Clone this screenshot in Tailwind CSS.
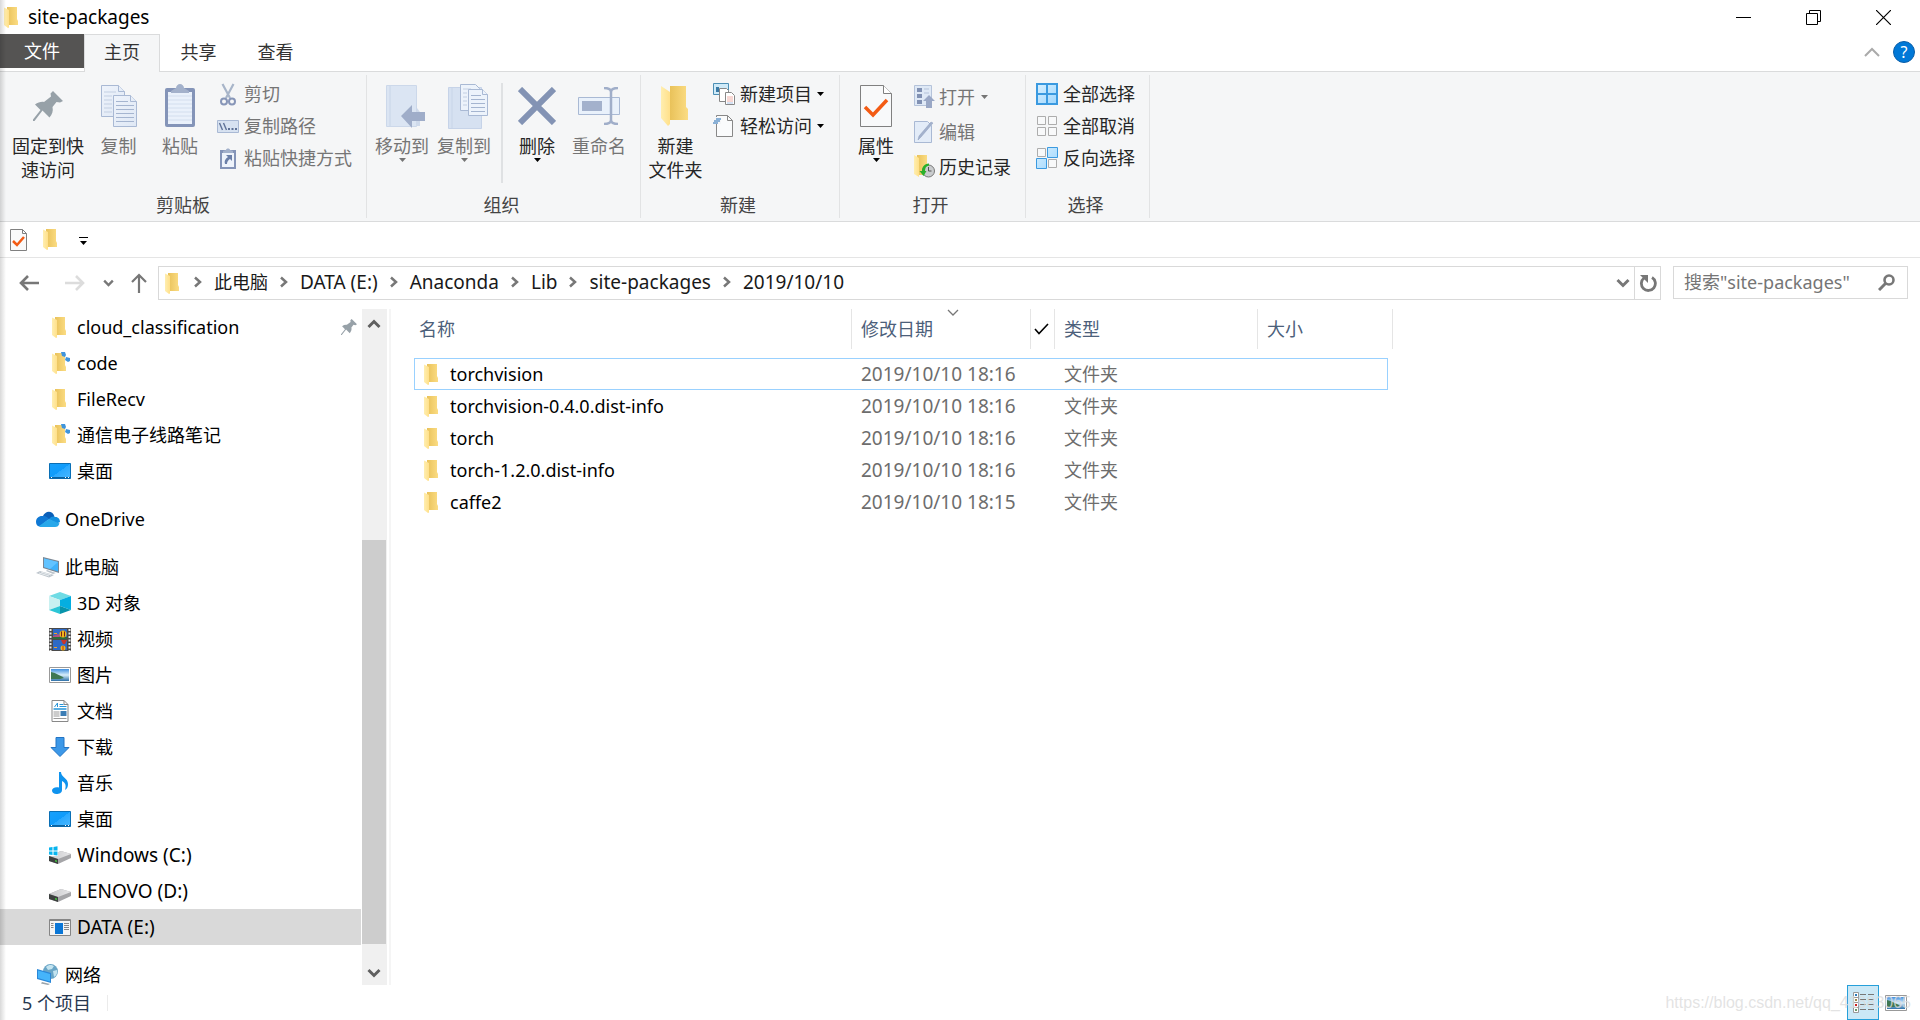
<!DOCTYPE html>
<html lang="zh-CN">
<head>
<meta charset="utf-8">
<meta name="viewport" content="width=device-width, initial-scale=1">
<title>site-packages</title>
<script src="https://cdn.jsdelivr.net/npm/@tailwindcss/browser@4"></script>
</head>
<body class="flex h-screen flex-col overflow-hidden bg-white font-['Noto_Sans','Noto_Sans_CJK_SC',sans-serif] text-[18px] leading-6 text-black">

<!-- Icon library -->
<svg class="absolute size-0" aria-hidden="true">
  <defs>
    <linearGradient id="gBack" x1="0" x2="1"><stop offset="0" stop-color="#e9c25a"/><stop offset="1" stop-color="#fbdc83"/></linearGradient>
    <linearGradient id="gFront" x1="0" x2="1"><stop offset="0" stop-color="#ffeeb0"/><stop offset="1" stop-color="#ffe08a"/></linearGradient>
    <linearGradient id="gDesk" x1="0" y1="0" x2="1" y2="1"><stop offset="0" stop-color="#18a0fb"/><stop offset=".5" stop-color="#109cfb"/><stop offset=".5" stop-color="#2aa9ff"/><stop offset="1" stop-color="#49b7ff"/></linearGradient>
    <linearGradient id="gPaper" x1="0" y1="0" x2="1" y2="1"><stop offset="0" stop-color="#eef3fb"/><stop offset="1" stop-color="#dfe8f5"/></linearGradient>
    <linearGradient id="gBlue" x1="0" y1="0" x2="1" y2="1"><stop offset="0" stop-color="#d8f0ff"/><stop offset="1" stop-color="#9fd6fd"/></linearGradient>
    <linearGradient id="gSky" x1="0" y1="0" x2="0" y2="1"><stop offset="0" stop-color="#3f8fe0"/><stop offset=".5" stop-color="#d8eefa"/><stop offset="1" stop-color="#2c6fa8"/></linearGradient>
    <linearGradient id="gDrive" x1="0" x2="1"><stop offset="0" stop-color="#c9c9cb"/><stop offset="1" stop-color="#e6e6e8"/></linearGradient>
  </defs>
  <symbol id="folder" viewBox="0 0 14 21"><path d="M3 0h10v12l1 2v4H3z" fill="url(#gBack)"/><path d="M0 .5 5 3v17.500L4 21 0 18z" fill="url(#gFront)"/></symbol>
  <symbol id="folderSync" viewBox="0 0 19 22"><path d="M3 1h10v12l1 2v4H3z" fill="url(#gBack)"/><path d="M0 1.500 5 4v17.500L4 22 0 19z" fill="url(#gFront)"/><path d="M9 0h4l1 3-1 2-3-1zM14 5l4 1v3l-2 1-3-2z" fill="#3f94dc"/></symbol>
  <symbol id="pin" viewBox="0 0 30 30"><path d="M20 0 30 10l-3 1.500-3.500-.5-4 5c1 4-.500 7.500-3 10.500l-7-7L1.500 30H0v-1.500L7.500 19 2 13.500c3-2 6-3 9-2.500l7-5.500-.5-3z" fill="#97a1a8"/></symbol>
  <symbol id="caret" viewBox="0 0 7 4"><path d="M0 0h7L3.500 4z" fill="currentColor"/></symbol>
  <symbol id="chev" viewBox="0 0 8 12"><path d="M1 1.500 6 6l-5 4.500" fill="none" stroke="currentColor" stroke-width="2.500"/></symbol>
  <symbol id="chevDown" viewBox="0 0 14 10"><path d="M1.500 2 7 7.500 12.500 2" fill="none" stroke="currentColor" stroke-width="3"/></symbol>
  <symbol id="copy" viewBox="0 0 36 42"><g fill="url(#gPaper)" stroke="#a9b9d4"><path d="M.5.5h17l6 6v25H.5z"/><path d="M17.500.5v6h6" /></g><path d="M3 7h12M3 11h8M3 15h8M3 19h8M3 23h8M3 27h8" stroke="#c3cfe2"/><g fill="url(#gPaper)" stroke="#a9b9d4"><path d="M12.500 10.500h17l6 6v25h-23z"/><path d="M29.500 10.500v6h6"/></g><path d="M15 16.500h12M15 20.500h18M15 24.500h18M15 28.500h18M15 32.500h18M15 36.500h18" stroke="#a5b5d0"/></symbol>
  <symbol id="paste" viewBox="0 0 30 44"><rect y="4" width="30" height="39" rx="2" fill="#8494b8"/><path d="M3 8h24v32H3z" fill="#eaf1fb"/><path d="M3 12h24M3 16h24M3 20h24M3 24h24M3 28h24M3 32h24M3 36h24" stroke="#d3deee"/><path d="M6 9V7l5-3c0-2 2-4 4-4s4 2 4 4l5 3v2z" fill="#a3b1cb"/></symbol>
  <symbol id="cut" viewBox="0 0 16 23"><path d="M2.500 1 10 15M13.500 1 6 15" stroke="#a8b5c9" stroke-width="2.200" fill="none"/><g fill="none" stroke="#8796b8" stroke-width="2"><circle cx="4" cy="18.500" r="3"/><circle cx="12" cy="18.500" r="3"/></g></symbol>
  <symbol id="path" viewBox="0 0 22 13"><path d="M.5.500h21v12H.5z" fill="#d7e2f1" stroke="#a9b9d4"/><path d="m2.500 3 3 7M6.500 3l3 7" stroke="#5f7297" stroke-width="1.400"/><path d="M11 8h2v2h-2zm3.500 0h2v2h-2zm3.500 0h2v2h-2z" fill="#5f7297"/></symbol>
  <symbol id="shortcut" viewBox="0 0 16 22"><path d="M0 3h16v19H0z" fill="#8494b8"/><path d="M2 6h12v14H2z" fill="#eef3fb"/><path d="M3 6V4l3-1c0-2 4-2 4 0l3 1v2z" fill="#a3b1cb"/><path d="M6 8h6v6l-2-2c-2 1-3 3-3 5l-2 0c-1-3 0-5 3-7z" fill="#6b7fa8"/></symbol>
  <symbol id="moveTo" viewBox="0 0 40 44"><path d="M.5 1.500h30v41H.5z" fill="#dbe5f3" stroke="#ccd8ea"/><path d="M4 2v40" stroke="#c8d5e8"/><path d="m31 24 3 4v14h-4z" fill="#cfdaeb"/><path d="M15 32 26 21v7h13v9H26v7z" fill="#9fadc9"/></symbol>
  <symbol id="copyTo" viewBox="0 0 40 46"><path d="M.5 3.500h33v41H.5z" fill="#d6e1f1" stroke="#c6d3e8"/><path d="M4 4v40" stroke="#c8d5e8"/><path d="M12.500.5h15l4 4v22h-19z" fill="#edf3fb" stroke="#a9b9d4"/><path d="M15 5h8M15 9h4M15 13h4M15 17h4M15 21h4" stroke="#c3cfe2"/><g fill="#edf3fb" stroke="#a9b9d4"><path d="M20.500 5.500h14l5 5v21h-19z"/><path d="M34.500 5.500v5h5"/></g><path d="M23 11.500h10M23 15.500h14M23 19.500h14M23 23.500h14M23 27.500h14" stroke="#a5b5d0"/></symbol>
  <symbol id="delete" viewBox="0 0 38 38"><path d="m2 2 34 34M36 2 2 36" stroke="#8393b4" stroke-width="6"/></symbol>
  <symbol id="rename" viewBox="0 0 42 38"><path d="M.5 10.500h41v17H.5z" fill="#e9f1fb" stroke="#a9b9d4"/><path d="M4 14h20v10H4z" fill="#a3b1cc"/><path d="M26 1c4 0 7 1 7 4v28c0 3-3 4-7 4M40 1c-4 0-7 1-7 4M33 33c0 3 3 4 7 4" fill="none" stroke="#a0aec9" stroke-width="2.500"/></symbol>
  <symbol id="newFolder" viewBox="0 0 30 42"><path d="M9 1h16v21l2 2v11H9z" fill="url(#gBack)"/><path d="M0 1 9 7v32l-2 2-7-8z" fill="url(#gFront)"/></symbol>
  <symbol id="newItem" viewBox="0 0 22 22"><path d="M.5.500h15v11H.5z" fill="#cfeaf8" stroke="#4d8fb5"/><path d="M3 4h3v5H3z" fill="#3a7aa6"/><path d="M6.500 5.500h7l2 2v11h-9z" fill="#fff" stroke="#888"/><path d="M12.500 9.500h6l3 3v9h-9z" fill="#fff" stroke="#888"/><path d="M14 14h6M14 16h6M14 18h6" stroke="#f0b0a8"/><path d="M14 20h6" stroke="#a9c4e8"/></symbol>
  <symbol id="easy" viewBox="0 0 22 22"><path d="M3.500.5h11l5 5v16h-16z" fill="#fafbfc" stroke="#888"/><path d="M14.500.5v5h5" fill="none" stroke="#888"/><path d="M0 2h8v7H0z" fill="#f5f6f8"/><path d="M3 4h5M1 6h6M0 8h5" stroke="#1f6ab3"/></symbol>
  <symbol id="props" viewBox="0 0 32 42"><path d="M.5.500h23l8 8v33H.5z" fill="#f8f9fa" stroke="#808080"/><path d="M23.500.5v8h8" fill="#fff" stroke="#808080"/><path d="m5 22 8 8L27 15" fill="none" stroke="#f35b14" stroke-width="3.500"/></symbol>
  <symbol id="open" viewBox="0 0 21 23"><path d="M.5.500h17v20H.5z" fill="#dfe9f6" stroke="#b5c3da"/><path d="M3 3h5v4H3zm0 6h5v4H3zm0 6h5v4H3z" fill="#8191b3"/><path d="M10 4h5M10 8h5" stroke="#b5c3da"/><path d="m15 10 6 6h-3v7h-6v-7H9z" fill="#9aa8c6"/></symbol>
  <symbol id="edit" viewBox="0 0 21 23"><path d="M.5 1.500h13l4 4v17H.5z" fill="#e3ecf8" stroke="#a9b9d4"/><path d="M19 3 7 17l-3 3 1-4L17 2z" fill="#a3b2cd" stroke="#8c9cbd" stroke-width=".5"/></symbol>
  <symbol id="history" viewBox="0 0 21 23"><path d="M3 0h10v20H3z" fill="url(#gBack)"/><path d="m0 0 5 3v19l-5-3z" fill="url(#gFront)"/><circle cx="14.500" cy="16" r="6" fill="#c9ccce" stroke="#777"/><path d="M14.500 12v4h3" stroke="#555" fill="none"/><path d="M15 8.500C10 9 8 12 8 16H5.500l4 5 3-5H11c0-3 1-5 4-5.500z" fill="#2bb02b"/></symbol>
  <symbol id="selAll" viewBox="0 0 22 22"><path d="M1 1h10v10H1zM11 1h10v10H11zM1 11h10v10H1zM11 11h10v10H11z" fill="url(#gBlue)" stroke="#3b9ae0" stroke-width="2"/></symbol>
  <symbol id="selNone" viewBox="0 0 22 22"><path d="M1.500 1.500h8v8h-8zM12.500 1.500h8v8h-8zM1.500 12.500h8v8h-8zM12.500 12.500h8v8h-8z" fill="#f8f9fa" stroke="#adadad"/></symbol>
  <symbol id="selInv" viewBox="0 0 22 22"><path d="M1.500 1.500h8v8h-8zM12.500 12.500h8v8h-8z" fill="#f8f9fa" stroke="#adadad"/><path d="M11.500.5h10v10h-10zM.5 11.500h10v10H.5z" fill="url(#gBlue)" stroke="#3b9ae0"/></symbol>
  <symbol id="propsSmall" viewBox="0 0 17 22"><path d="M.5.500h12l4 4v17H.5z" fill="#fafafa" stroke="#808080"/><path d="M12.500.5v4h4" fill="none" stroke="#808080"/><path d="m3 12 4 4 7-8" fill="none" stroke="#f35b14" stroke-width="2.500"/></symbol>
  <symbol id="arrow" viewBox="0 0 20 16"><path d="M20 8H2M9 1 2 8l7 7" fill="none" stroke="currentColor" stroke-width="2.600"/></symbol>
  <symbol id="desktop" viewBox="0 0 22 16"><path d="M.5.500h21v15H.5z" fill="url(#gDesk)" stroke="#0a6fb5"/><path d="M1 14h20v1.500H1z" fill="#0b62a0"/><path d="M2 14.500h1M16 14.500h1M19 14.500h1" stroke="#fff"/></symbol>
  <symbol id="onedrive" viewBox="0 0 24 16"><path d="M7 5C9 0 16-1.500 18.500 5.500L13 9z" fill="#0a5fb8"/><path d="M0 11c0-4 3-6.500 7-6 2-.5 5 1 6 3L4 15.500C2 15.500 0 14 0 11z" fill="#0f78d4"/><path d="M13 8c2-3 5-3 6.500-2 3 0 4.500 2.500 4.500 5l-4 2z" fill="#1490df"/><path d="m3 15 10-7 10.500 4.500c-1 2.500-2 3.500-4.500 3.500H5c-1 0-1.500-.5-2-1z" fill="#28a8ea"/></symbol>
  <symbol id="pc" viewBox="0 0 24 21"><path d="m7 0 16 4v12L7 11z" fill="#7b8794"/><path d="m8 1.500 14 3.500v9.500L8 10z" fill="#3fb1fa"/><path d="m8 1.500 14 3.500-8 7-6-2z" fill="#62c3ff"/><path d="m11 13 9 3-3 1-7-3zM0 16l4-2 14 4-5 2.500z" fill="#bcc4cb"/><path d="m3 16 10 3M5 15l10 3" stroke="#e8ecef"/></symbol>
  <symbol id="cube" viewBox="0 0 22 22"><path d="M11 0 22 4 11 8 0 4z" fill="#6fdbe4"/><path d="m11 8 11-4v14l-11-4z" fill="#05aee0"/><path d="m0 4 11 4v6L0 18z" fill="#c9f1f1"/><path d="m0 18 11-4v8z" fill="#2cc6d6"/><path d="m22 18-11-4v8z" fill="#0894ab"/></symbol>
  <symbol id="video" viewBox="0 0 22 23"><path d="M0 0h22v23H0z" fill="#4a4a4a"/><path d="M4 1h14v10H4zM4 12h14v10H4z" fill="#2e6ac6"/><path d="M1.500 1v22M20.500 1v22" stroke="#e8e8e8" stroke-width="2" stroke-dasharray="2 1.500"/><path d="M4 8l5-2 3 2-2 1H4z" fill="#b4517d"/><path d="M4 9h14v2H4z" fill="#2c6b3a"/><circle cx="14" cy="6" r="3.500" fill="#f0b51b"/><path d="M12.500 3.500v5M15.500 3.500v5" stroke="#7a2418"/><path d="m12 12 6 0-2 4h-2z" fill="#c8362b"/><circle cx="14" cy="20" r="2.500" fill="#f0b51b"/><path d="M14 18v4" stroke="#c22d18"/><path d="M5 5.500h3M5 19.500h3" stroke="#f0a32c"/></symbol>
  <symbol id="picture" viewBox="0 0 22 16"><path d="M.5.500h21v15H.5z" fill="#fff" stroke="#999"/><path d="M2 2h18v12H2z" fill="url(#gSky)"/><path d="M2 5c5 1 10 4 13 6l-4 1H2z" fill="#3e7753"/></symbol>
  <symbol id="doc" viewBox="0 0 17 22"><path d="M.5.500h12l4 4v17H.5z" fill="#fff" stroke="#888"/><path d="M12.500.5v4h4" fill="none" stroke="#888"/><path d="m3 7 3-4v4M8 4.500h4M8 6.500h7" stroke="#2694d8" fill="none"/><path d="M2 9h13" stroke="#2694d8" stroke-width="1.500"/><path d="M2 12h6M2 14h6M2 16h6M2 18.500h13" stroke="#999"/><path d="M9 11h6v5H9z" fill="#3c7db5"/></symbol>
  <symbol id="download" viewBox="0 0 19 20"><path d="M5.500.5h8v10h5l-9 9-9-9h5z" fill="#3c98e8" stroke="#2374c4"/></symbol>
  <symbol id="music" viewBox="0 0 16 22"><path d="M7 0h2c0 5 7 6 7 12 0 3-1 5-3 6 2-6-1-8-3-9v9c0 3-3 4-5.500 4S0 20.500 0 18.500s3-4 7-3z" fill="#0f93ee"/></symbol>
  <symbol id="drive" viewBox="0 0 22 13"><path d="m0 5 12-5 10 3v4L9 13 0 10z" fill="#a5a5a8"/><path d="m0 5 12-5 10 3L9 8z" fill="url(#gDrive)"/><path d="m0 5 9 3v5l-9-3z" fill="#3d403f"/><path d="m6 9 2 .6v1.500l-2-.6z" fill="#43c43f"/></symbol>
  <symbol id="driveWin" viewBox="0 0 22 18"><g transform="translate(0 5)"><path d="m0 5 12-5 10 3v4L9 13 0 10z" fill="#a5a5a8"/><path d="m0 5 12-5 10 3L9 8z" fill="url(#gDrive)"/><path d="m0 5 9 3v5l-9-3z" fill="#3d403f"/><path d="m6 9 2 .6v1.500l-2-.6z" fill="#43c43f"/></g><path d="M0 0h9v10H0z" fill="#fff"/><path d="M0 1.500 3.500 1v3.500H0zM4.500.9 8.500.3v4.200h-4zM0 5.500h3.500V9L0 8.600zM4.500 5.500h4v4l-4-.6z" fill="#07b4ee"/></symbol>
  <symbol id="app" viewBox="0 0 22 17"><path d="M.5.500h21v16H.5z" fill="#f4f4f4" stroke="#858585"/><path d="M1 1h20v1H1z" fill="#858585"/><path d="M6 4h8v11H6z" fill="#0a76d6"/><path d="M2 4.500h2.500M2 6.500h2.500M2 8.500h2.500M15 4.500h5M15 6.500h5M15 8.500h5M15 10.500h5" stroke="#888"/></symbol>
  <symbol id="network" viewBox="0 0 22 21"><circle cx="13.500" cy="7.500" r="7.500" fill="#69a5c6"/><path d="M9 3c3-3 6-2 8-1l-2 3-4 1zM16 7l4-1c1 3-1 6-3 7z" fill="#c3e3ef"/><path d="m0 5 14 4v10L0 15z" fill="#2a87d8"/><path d="m1 6.500 12 3.500v7.500L1 14z" fill="#45b4fa"/><path d="m5 18 8 2-2 1-7-1.500z" fill="#9aa4ab"/></symbol>
</svg>

<!-- Title bar -->
<header class="flex h-[34px] shrink-0 items-center justify-between">
  <div class="flex items-center gap-[10px] pl-1">
    <svg class="h-[21px] w-[14px]"><use href="#folder"/></svg>
    <h1 class="text-[19px] leading-8">site-packages</h1>
  </div>
  <div class="flex h-full pr-0.5">
    <button class="grid w-[70px] place-items-center" aria-label="最小化"><svg class="size-[15px]" viewBox="0 0 15 15"><path d="M0 7.500h15" stroke="#000"/></svg></button>
    <button class="grid w-[70px] place-items-center" aria-label="还原"><svg class="size-[15px]" viewBox="0 0 15 15"><path d="M.5 3.500h11v11H.5zM3.500 3.500v-3h11v11h-3" fill="none" stroke="#000"/></svg></button>
    <button class="grid w-[70px] place-items-center" aria-label="关闭"><svg class="size-[15px]" viewBox="0 0 15 15"><path d="m0 0 15 15M15 0 0 15" stroke="#000" stroke-width="1.200"/></svg></button>
  </div>
</header>

<!-- Ribbon tabs -->
<nav class="flex h-[38px] shrink-0 border-b border-[#dadbdc] text-[#333]" aria-label="功能区">
  <button class="h-[34px] w-[84px] bg-[#555453] text-white">文件</button>
  <button class="h-[38px] w-[76px] border border-b-0 border-[#dadbdc] bg-[#f5f6f7] pb-[3px]">主页</button>
  <button class="w-[77px] pb-0.5">共享</button>
  <button class="w-[77px] pb-0.5">查看</button>
  <div class="ml-auto flex items-center gap-[13px] pr-[5px] pb-0.5">
    <button aria-label="最小化功能区"><svg class="h-[10px] w-4" viewBox="0 0 16 10"><path d="m1 9 7-7 7 7" fill="none" stroke="#aaa" stroke-width="2"/></svg></button>
    <button class="size-[22px] rounded-full border border-[#0a5ea8] bg-[#0078d7] text-[16px] leading-5 text-white">?</button>
  </div>
</nav>

<!-- Ribbon -->
<section class="flex h-[150px] shrink-0 border-b border-[#dadbdc] bg-[#f5f6f7] py-[3px] text-[#262626]">
  <div class="flex w-[367px] flex-col border-r border-[#e2e3e4]">
    <div class="flex flex-1 gap-0 pl-2">
      <button class="flex w-20 flex-col items-center gap-1.5 pt-[9px]"><span class="grid h-11 place-items-center"><svg class="size-[30px]"><use href="#pin"/></svg></span><span>固定到快<br>速访问</span></button>
      <button class="flex w-[61px] flex-col items-center gap-1.5 pt-[9px] text-[#757575]"><span class="grid h-11 place-items-center"><svg class="h-[42px] w-9"><use href="#copy"/></svg></span><span>复制</span></button>
      <button class="flex w-[62px] flex-col items-center gap-1.5 pt-[9px] text-[#757575]"><span class="grid h-11 place-items-center"><svg class="h-11 w-[30px]"><use href="#paste"/></svg></span><span>粘贴</span></button>
      <div class="flex flex-col pt-[3px] pl-1.5 text-[#757575]">
        <button class="flex h-8 items-center gap-[5px]"><span class="grid w-[22px] place-items-center"><svg class="h-[23px] w-4"><use href="#cut"/></svg></span>剪切</button>
        <button class="flex h-8 items-center gap-[5px]"><svg class="h-[13px] w-[22px]"><use href="#path"/></svg>复制路径</button>
        <button class="flex h-8 items-center gap-[5px]"><span class="grid w-[22px] place-items-center"><svg class="h-[22px] w-4"><use href="#shortcut"/></svg></span>粘贴快捷方式</button>
      </div>
    </div>
    <div class="h-[26px] text-center leading-[26px] text-[#444]">剪贴板</div>
  </div>

  <div class="flex w-[274px] flex-col border-r border-[#e2e3e4]">
    <div class="flex flex-1 pl-1">
      <button class="flex w-[62px] flex-col items-center pt-[9px] text-[#757575]"><span class="mb-1.5 grid h-11 place-items-center pl-2"><svg class="h-11 w-10"><use href="#moveTo"/></svg></span><span>移动到</span><svg class="h-1 w-[7px]"><use href="#caret"/></svg></button>
      <button class="flex w-[62px] flex-col items-center pt-[9px] text-[#757575]"><span class="mb-1.5 grid h-11 place-items-center pl-2"><svg class="h-[46px] w-10"><use href="#copyTo"/></svg></span><span>复制到</span><svg class="h-1 w-[7px]"><use href="#caret"/></svg></button>
      <div class="mt-2 ml-1.5 h-[100px] w-0.5 bg-[#dfe1e3]"></div>
      <button class="ml-0.5 flex w-16 flex-col items-center pt-[9px]"><span class="mb-1.5 grid h-11 place-items-center"><svg class="size-[38px]"><use href="#delete"/></svg></span><span>删除</span><svg class="h-1 w-[7px] text-black"><use href="#caret"/></svg></button>
      <button class="flex w-[60px] flex-col items-center pt-[9px] text-[#757575]"><span class="mb-1.5 grid h-11 place-items-center"><svg class="h-[38px] w-[42px]"><use href="#rename"/></svg></span><span>重命名</span></button>
    </div>
    <div class="h-[26px] pr-1 text-center leading-[26px] text-[#444]">组织</div>
  </div>

  <div class="flex w-[199px] flex-col border-r border-[#e2e3e4]">
    <div class="flex flex-1">
      <button class="flex w-[69px] flex-col items-center gap-1.5 pt-[9px]"><span class="grid h-11 place-items-center"><svg class="h-[42px] w-[30px]"><use href="#newFolder"/></svg></span><span>新建<br>文件夹</span></button>
      <div class="flex flex-col pt-[3px] pl-[3px]">
        <button class="flex h-8 items-center gap-[5px]"><svg class="size-[22px]"><use href="#newItem"/></svg>新建项目<svg class="h-1 w-[7px] text-black"><use href="#caret"/></svg></button>
        <button class="flex h-8 items-center gap-[5px]"><svg class="size-[22px]"><use href="#easy"/></svg>轻松访问<svg class="h-1 w-[7px] text-black"><use href="#caret"/></svg></button>
      </div>
    </div>
    <div class="h-[26px] pr-1 text-center leading-[26px] text-[#444]">新建</div>
  </div>

  <div class="flex w-[186px] flex-col border-r border-[#e2e3e4]">
    <div class="flex flex-1">
      <button class="ml-1 flex w-16 flex-col items-center pt-[9px]"><span class="mb-1.5 grid h-11 place-items-center"><svg class="h-[42px] w-8"><use href="#props"/></svg></span><span>属性</span><svg class="h-1 w-[7px] text-black"><use href="#caret"/></svg></button>
      <div class="flex flex-col pt-1 pl-1.5">
        <button class="flex h-[35px] items-center gap-1 text-[#757575]"><svg class="h-[23px] w-[21px]"><use href="#open"/></svg>打开<svg class="ml-0.5 h-1 w-[7px]"><use href="#caret"/></svg></button>
        <button class="flex h-[35px] items-center gap-1 text-[#757575]"><svg class="h-[23px] w-[21px]"><use href="#edit"/></svg>编辑</button>
        <button class="flex h-[35px] items-center gap-1"><svg class="h-[23px] w-[21px]"><use href="#history"/></svg>历史记录</button>
      </div>
    </div>
    <div class="h-[26px] pr-1 text-center leading-[26px] text-[#444]">打开</div>
  </div>

  <div class="flex w-[124px] flex-col border-r border-[#e2e3e4]">
    <div class="flex flex-1 flex-col pt-[3px] pl-[10px]">
      <button class="flex h-8 items-center gap-[5px]"><svg class="size-[22px]"><use href="#selAll"/></svg>全部选择</button>
      <button class="flex h-8 items-center gap-[5px]"><svg class="size-[22px]"><use href="#selNone"/></svg>全部取消</button>
      <button class="flex h-8 items-center gap-[5px]"><svg class="size-[22px]"><use href="#selInv"/></svg>反向选择</button>
    </div>
    <div class="h-[26px] pr-1 text-center leading-[26px] text-[#444]">选择</div>
  </div>
</section>

<!-- Quick access toolbar -->
<div class="flex h-9 shrink-0 items-center border-b border-[#e5e5e5] pl-[10px]">
  <button aria-label="属性"><svg class="h-[22px] w-[17px]"><use href="#propsSmall"/></svg></button>
  <button class="ml-4" aria-label="新建文件夹"><svg class="h-[21px] w-[14px]"><use href="#folder"/></svg></button>
  <button class="ml-[22px] pt-0.5" aria-label="自定义快速访问工具栏"><svg class="h-2 w-[9px]" viewBox="0 0 9 8"><path d="M0 .5h9" stroke="#000"/><path d="M1 4h7L4.500 8z"/></svg></button>
</div>

<!-- Address bar -->
<div class="flex h-[51px] shrink-0 items-start pt-2 pr-3 pl-[19px]">
  <div class="flex h-[34px] w-[139px] shrink-0 items-center text-[#777]">
    <button aria-label="后退"><svg class="h-4 w-5"><use href="#arrow"/></svg></button>
    <button class="ml-[26px] text-[#dcdcdc]" aria-label="前进"><svg class="h-4 w-5 rotate-180"><use href="#arrow"/></svg></button>
    <button class="ml-[18px]" aria-label="最近浏览的位置"><svg class="h-2 w-[11px]"><use href="#chevDown"/></svg></button>
    <button class="ml-[17px]" aria-label="上移"><svg class="h-5 w-4" viewBox="0 0 16 20"><path d="M8 20V2M1 9l7-7 7 7" fill="none" stroke="currentColor" stroke-width="2.200"/></svg></button>
  </div>
  <div class="flex h-[34px] flex-1 items-center border border-[#d9d9d9] pl-1.5">
    <svg class="mr-[15px] h-[21px] w-[14px]"><use href="#folder"/></svg>
    <nav class="flex flex-1 items-center gap-3 pb-0.5 text-[19px] text-[#191919]" aria-label="路径">
      <svg class="h-3 w-2 text-[#777]"><use href="#chev"/></svg><a href="#" class="text-[18px]">此电脑</a>
      <svg class="h-3 w-2 text-[#777]"><use href="#chev"/></svg><a href="#">DATA (E:)</a>
      <svg class="h-3 w-2 text-[#777]"><use href="#chev"/></svg><a href="#">Anaconda</a>
      <svg class="h-3 w-2 text-[#777]"><use href="#chev"/></svg><a href="#">Lib</a>
      <svg class="h-3 w-2 text-[#777]"><use href="#chev"/></svg><a href="#">site-packages</a>
      <svg class="h-3 w-2 text-[#777]"><use href="#chev"/></svg><a href="#">2019/10/10</a>
    </nav>
    <button class="mr-1 text-[#777]" aria-label="历史位置"><svg class="h-[10px] w-[14px]"><use href="#chevDown"/></svg></button>
    <button class="grid h-8 w-[26px] place-items-center border-l border-[#d9d9d9]" aria-label="刷新"><svg class="size-[18px]" viewBox="0 0 18 18"><path d="M13 3.500a7 7 0 1 1-8 .5" fill="none" stroke="#777" stroke-width="2.800"/><path d="M1 1h8v8z" fill="#777"/></svg></button>
  </div>
  <form class="ml-3 flex h-[33px] w-[235px] items-center border border-[#d9d9d9] pr-3 pl-[10px]">
    <input type="text" aria-label="搜索" placeholder="搜索&quot;site-packages&quot;" class="w-0 flex-1 pb-0.5 outline-none placeholder:text-[#757575]">
    <button type="button" aria-label="开始搜索"><svg class="size-[17px]" viewBox="0 0 17 17"><circle cx="11" cy="6" r="4.500" fill="none" stroke="#777" stroke-width="2.600"/><path d="m7.500 9.500-6.500 6.500" stroke="#777" stroke-width="3"/></svg></button>
  </form>
</div>

<!-- Navigation pane and file list -->
<main class="flex min-h-0 flex-1">
  <nav class="w-[361px] shrink-0" aria-label="导航窗格">
    <a href="#" class="flex h-9 items-center pl-[52px]"><svg class="mr-[11px] h-[21px] w-[14px]"><use href="#folder"/></svg>cloud_classification<svg class="mr-1 ml-auto size-4"><use href="#pin"/></svg></a>
    <a href="#" class="flex h-9 items-center gap-1.5 pl-[52px]"><svg class="h-[22px] w-[19px]"><use href="#folderSync"/></svg>code</a>
    <a href="#" class="flex h-9 items-center pl-[52px]"><svg class="mr-[11px] h-[21px] w-[14px]"><use href="#folder"/></svg>FileRecv</a>
    <a href="#" class="flex h-9 items-center gap-1.5 pl-[52px]"><svg class="h-[22px] w-[19px]"><use href="#folderSync"/></svg>通信电子线路笔记</a>
    <a href="#" class="flex h-9 items-center gap-1.5 pl-[49px]"><svg class="h-4 w-[22px]"><use href="#desktop"/></svg>桌面</a>
    <a href="#" class="mt-3 flex h-9 items-center gap-[5px] pl-9"><svg class="h-4 w-6"><use href="#onedrive"/></svg>OneDrive</a>
    <a href="#" class="mt-3 flex h-9 items-center gap-[5px] pl-9"><svg class="h-[21px] w-6"><use href="#pc"/></svg>此电脑</a>
    <a href="#" class="flex h-9 items-center gap-1.5 pl-[49px]"><svg class="size-[22px]"><use href="#cube"/></svg>3D 对象</a>
    <a href="#" class="flex h-9 items-center gap-1.5 pl-[49px]"><svg class="h-[23px] w-[22px]"><use href="#video"/></svg>视频</a>
    <a href="#" class="flex h-9 items-center gap-1.5 pl-[49px]"><svg class="h-4 w-[22px]"><use href="#picture"/></svg>图片</a>
    <a href="#" class="flex h-9 items-center gap-1.5 pl-[49px]"><svg class="h-[22px] w-[22px]"><use href="#doc"/></svg>文档</a>
    <a href="#" class="flex h-9 items-center gap-1.5 pl-[49px]"><svg class="h-5 w-[22px]"><use href="#download"/></svg>下载</a>
    <a href="#" class="flex h-9 items-center gap-1.5 pl-[49px]"><svg class="h-[22px] w-[22px]"><use href="#music"/></svg>音乐</a>
    <a href="#" class="flex h-9 items-center gap-1.5 pl-[49px]"><svg class="h-4 w-[22px]"><use href="#desktop"/></svg>桌面</a>
    <a href="#" class="flex h-9 items-center gap-1.5 pl-[49px] text-[19px]"><svg class="h-[18px] w-[22px]"><use href="#driveWin"/></svg>Windows (C:)</a>
    <a href="#" class="flex h-9 items-center gap-1.5 pl-[49px] text-[19px]"><svg class="mt-2 h-[13px] w-[22px]"><use href="#drive"/></svg>LENOVO (D:)</a>
    <a href="#" class="flex h-9 items-center gap-1.5 bg-[#d9d9d9] pl-[49px] text-[19px]"><svg class="h-[17px] w-[22px]"><use href="#app"/></svg>DATA (E:)</a>
    <a href="#" class="mt-3 flex h-7 items-end gap-1.5 pl-[37px] leading-5"><svg class="h-[21px] w-[22px]"><use href="#network"/></svg>网络</a>
  </nav>
  <div class="ml-px flex w-[25px] shrink-0 flex-col items-center bg-[#f0f0f0] pr-px text-[#606060]">
    <svg class="my-[10px] h-[10px] w-[14px] shrink-0 rotate-180"><use href="#chevDown"/></svg>
    <div class="mt-[201px] w-full flex-1 bg-[#cdcdcd]"></div>
    <svg class="mt-6 mb-[7px] h-[10px] w-[14px] shrink-0"><use href="#chevDown"/></svg>
  </div>
  <div class="mr-[23px] ml-0.5 w-0.5 shrink-0 bg-[#f5f5f5]"></div>

  <div class="min-w-0 flex-1">
    <table class="w-[979px] table-fixed border-separate border-spacing-0 text-left">
      <colgroup><col class="w-[438px]"><col class="w-[179px]"><col class="w-6"><col class="w-[203px]"><col class="w-[130px]"><col class="w-[5px]"></colgroup>
      <thead class="text-[#4c607a]">
        <tr class="h-10">
          <th scope="col" class="border-r border-[#e5e5e5] pl-[5px] font-normal">名称</th>
          <th scope="col" class="relative border-r border-[#e5e5e5] pl-[9px] font-normal">修改日期<svg class="absolute top-0 left-[95px] h-[7px] w-3" viewBox="0 0 12 7"><path d="m1 1 5 5 5-5" fill="none" stroke="#777" stroke-width="1.300"/></svg></th>
          <th scope="col" class="border-r border-[#e5e5e5] pl-[3px] font-normal" aria-label="状态"><svg class="h-3 w-[15px]" viewBox="0 0 15 12"><path d="m1 6 4 4.500L14 1" fill="none" stroke="#000" stroke-width="1.600"/></svg></th>
          <th scope="col" class="border-r border-[#e5e5e5] pl-[9px] font-normal">类型</th>
          <th scope="col" colspan="2" class="border-r border-[#e5e5e5] pl-[9px] font-normal">大小</th>
        </tr>
      </thead>
      <tbody class="text-[#6d6d6d]">
        <tr class="h-[9px]" aria-hidden="true"><td colspan="6"></td></tr>
        <tr class="h-8">
          <td class="border-y border-l border-[#99d1ff] pl-[9px] text-black"><span class="flex items-center gap-3"><svg class="h-[21px] w-[14px]"><use href="#folder"/></svg>torchvision</span></td><td class="border-y border-[#99d1ff] pl-[9px] text-[19px]">2019/10/10 18:16</td><td class="border-y border-[#99d1ff]"></td><td class="border-y border-[#99d1ff] pl-[9px]">文件夹</td><td class="border-y border-r border-[#99d1ff]"></td>
        </tr>
        <tr class="h-8">
          <td class="pl-[10px] text-black"><span class="flex items-center gap-3"><svg class="h-[21px] w-[14px]"><use href="#folder"/></svg>torchvision-0.4.0.dist-info</span></td><td class="pl-[9px] text-[19px]">2019/10/10 18:16</td><td></td><td class="pl-[9px]">文件夹</td><td></td>
        </tr>
        <tr class="h-8">
          <td class="pl-[10px] text-black"><span class="flex items-center gap-3"><svg class="h-[21px] w-[14px]"><use href="#folder"/></svg>torch</span></td><td class="pl-[9px] text-[19px]">2019/10/10 18:16</td><td></td><td class="pl-[9px]">文件夹</td><td></td>
        </tr>
        <tr class="h-8">
          <td class="pl-[10px] text-black"><span class="flex items-center gap-3"><svg class="h-[21px] w-[14px]"><use href="#folder"/></svg>torch-1.2.0.dist-info</span></td><td class="pl-[9px] text-[19px]">2019/10/10 18:16</td><td></td><td class="pl-[9px]">文件夹</td><td></td>
        </tr>
        <tr class="h-8">
          <td class="pl-[10px] text-black"><span class="flex items-center gap-3"><svg class="h-[21px] w-[14px]"><use href="#folder"/></svg>caffe2</span></td><td class="pl-[9px] text-[19px]">2019/10/10 18:15</td><td></td><td class="pl-[9px]">文件夹</td><td></td>
        </tr>
      </tbody>
    </table>
  </div>
</main>

<!-- Status bar -->
<footer class="relative flex h-[35px] shrink-0 items-center pr-[13px] pl-[22px] text-[#26374f]">
  <span class="w-[86px] border-r border-[#ebebeb] leading-4">5 个项目</span>
  <button class="ml-auto grid h-[35px] w-8 place-items-center border border-[#26a0da] bg-[#cbe8f6]" aria-label="详细信息"><svg class="h-[21px] w-[21px]" viewBox="0 0 21 21"><path d="M.5.500h5v5h-5zM.5 5.500h5v5h-5zM.5 10.500h5v5h-5zM.5 15.500h5v5h-5z" fill="#fff" stroke="#999"/><path d="M2 2h2v2H2z" fill="#2a7ab8"/><path d="M2 7h2v2H2z" fill="#a0894a"/><path d="M2 12h2v2H2z" fill="#c22"/><path d="M2 17h2v2H2z" fill="#6a9a6a"/><path d="M7 2.500h6M15 2.500h6M7 7.500h6M15 7.500h6M7 12.500h6M15 12.500h6M7 17.500h6M15 17.500h6" stroke="#777"/></svg></button>
  <button class="ml-1.5" aria-label="大图标"><svg class="h-4 w-[22px]"><use href="#picture"/></svg></button>
  <span class="absolute right-[9px] bottom-[5px] font-['Liberation_Sans',sans-serif] text-[16px] text-[#dcdcdc]/80">https://blog.csdn.net/qq_41683065</span>
</footer>

<!-- Soft shade along the window's left edge -->
<div class="pointer-events-none absolute inset-y-0 left-0 w-1.5 bg-linear-to-r from-black/15 to-transparent"></div>
</body>
</html>
